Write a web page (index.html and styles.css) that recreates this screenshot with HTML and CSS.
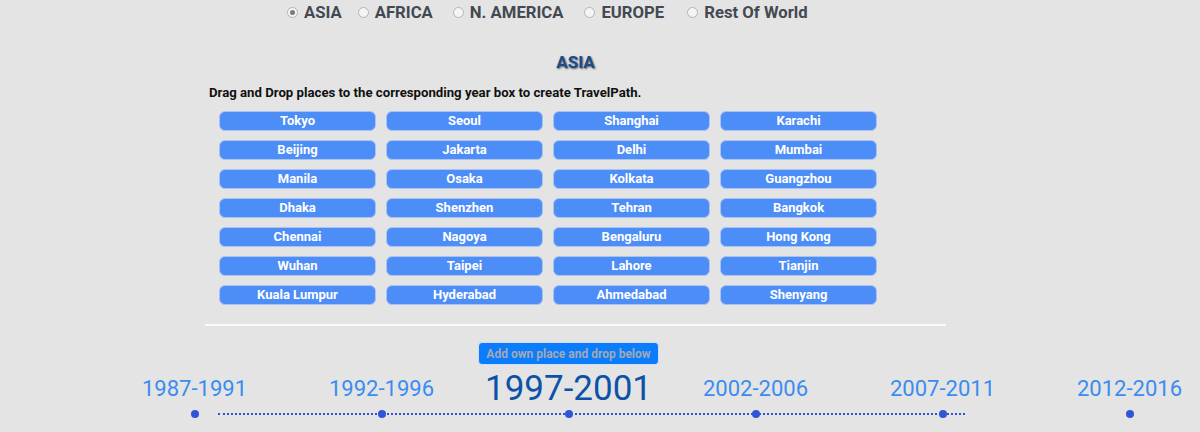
FILE: index.html
```html
<!DOCTYPE html>
<html>
<head>
<meta charset="utf-8">
<title>TravelPath</title>
<link rel="stylesheet" href="styles.css">
</head>
<body>
<div class="regions">
  <label class="region"><span class="radio checked"></span>ASIA</label>
  <label class="region"><span class="radio"></span>AFRICA</label>
  <label class="region"><span class="radio"></span>N. AMERICA</label>
  <label class="region"><span class="radio"></span>EUROPE</label>
  <label class="region"><span class="radio"></span>Rest Of World</label>
</div>
<div class="main">
  <h2 class="title">ASIA</h2>
  <p class="instr">Drag and Drop places to the corresponding year box to create TravelPath.</p>
  <div class="places">
    <div class="place">Tokyo</div><div class="place">Seoul</div><div class="place">Shanghai</div><div class="place">Karachi</div>
    <div class="place">Beijing</div><div class="place">Jakarta</div><div class="place">Delhi</div><div class="place">Mumbai</div>
    <div class="place">Manila</div><div class="place">Osaka</div><div class="place">Kolkata</div><div class="place">Guangzhou</div>
    <div class="place">Dhaka</div><div class="place">Shenzhen</div><div class="place">Tehran</div><div class="place">Bangkok</div>
    <div class="place">Chennai</div><div class="place">Nagoya</div><div class="place">Bengaluru</div><div class="place">Hong Kong</div>
    <div class="place">Wuhan</div><div class="place">Taipei</div><div class="place">Lahore</div><div class="place">Tianjin</div>
    <div class="place">Kuala Lumpur</div><div class="place">Hyderabad</div><div class="place">Ahmedabad</div><div class="place">Shenyang</div>
  </div>
  <div class="rule"></div>
</div>
<div class="timeline">
  <div class="add-cell"><button class="add-btn">Add own place and drop below</button></div>
  <div class="year">1987-1991</div>
  <div class="year">1992-1996</div>
  <div class="year active">1997-2001</div>
  <div class="year">2002-2006</div>
  <div class="year">2007-2011</div>
  <div class="year">2012-2016</div>
  <div class="track">
    <span class="dot"></span><span class="dot"></span><span class="dot"></span><span class="dot"></span><span class="dot"></span><span class="dot"></span>
  </div>
</div>
</body>
</html>
```
FILE: styles.css
```css
html, body {
  margin: 0;
  padding: 0;
}
body {
  background: #e4e4e4;
  font-family: Roboto, "Liberation Sans", Arial, sans-serif;
  width: 1200px;
  height: 432px;
  overflow: hidden;
}
.regions {
  display: flex;
  align-items: center;
  height: 24px;
  padding-left: 287px;
}
.region {
  display: flex;
  align-items: center;
  font-weight: 700;
  font-size: 16.7px;
  color: #434952;
  margin-right: 16px;
}
.region:nth-child(2) { margin-right: 20px; }
.region:nth-child(3) { margin-right: 21px; }
.region:nth-child(4) { margin-right: 23px; }
.radio {
  box-sizing: border-box;
  width: 11px;
  height: 11px;
  border-radius: 50%;
  border: 1px solid #b4b4b4;
  background: #f4f4f4;
  margin-right: 6px;
  display: flex;
  align-items: center;
  justify-content: center;
}
.radio.checked::after {
  content: "";
  width: 5px;
  height: 5px;
  border-radius: 50%;
  background: #7a7a7a;
}
.main {
  margin-left: 205px;
  width: 741px;
}
.title {
  margin: 28px 0 0;
  text-align: center;
  font-size: 17px;
  line-height: 20px;
  font-weight: 700;
  color: #1b4b8a;
  text-shadow: 1px 1px 2px rgba(0, 0, 0, 0.6);
}
.instr {
  margin: 13px 0 0 4px;
  font-size: 13.2px;
  line-height: 16px;
  font-weight: 700;
  color: #111;
}
.places {
  margin: 10px 0 0 14px;
  display: grid;
  grid-template-columns: repeat(4, 157px);
  column-gap: 10px;
  row-gap: 9px;
}
.place {
  box-sizing: border-box;
  height: 20px;
  border: 1px solid #a9c4f2;
  border-radius: 6px;
  background: #4d8df7;
  color: #fff;
  font-size: 13px;
  font-weight: 700;
  line-height: 18px;
  text-align: center;
}
.rule {
  margin-top: 19px;
  height: 2px;
  background: #fafafa;
}
.timeline {
  margin: 16px 0 0 101px;
  display: grid;
  grid-template-columns: repeat(6, 187px);
  grid-template-rows: 23px 44px 10px;
}
.add-cell {
  grid-column: 3;
  grid-row: 1;
  display: flex;
  justify-content: center;
}
.add-btn {
  box-sizing: border-box;
  height: 23px;
  padding: 0 7px;
  border: 1px solid #cfe0f6;
  border-radius: 4px;
  background: #0b7dfc;
  color: #a2a9b3;
  font-family: Roboto, "Liberation Sans", Arial, sans-serif;
  font-size: 12px;
  font-weight: 700;
}
.year {
  grid-row: 2;
  display: flex;
  align-items: center;
  justify-content: center;
  padding-top: 3px;
  font-size: 22px;
  color: #3a8cf2;
}
.year.active {
  font-size: 35px;
  color: #0b52a8;
}
.track {
  grid-row: 3;
  grid-column: 1 / -1;
  display: grid;
  grid-template-columns: repeat(6, 187px);
  align-items: center;
  justify-items: center;
  position: relative;
}
.track::before {
  content: "";
  position: absolute;
  left: 117px;
  width: 747px;
  top: 4px;
  border-top: 2px dotted #2f55d6;
}
.dot {
  position: relative;
  width: 8px;
  height: 8px;
  border-radius: 50%;
  background: #2f55d6;
}
```
